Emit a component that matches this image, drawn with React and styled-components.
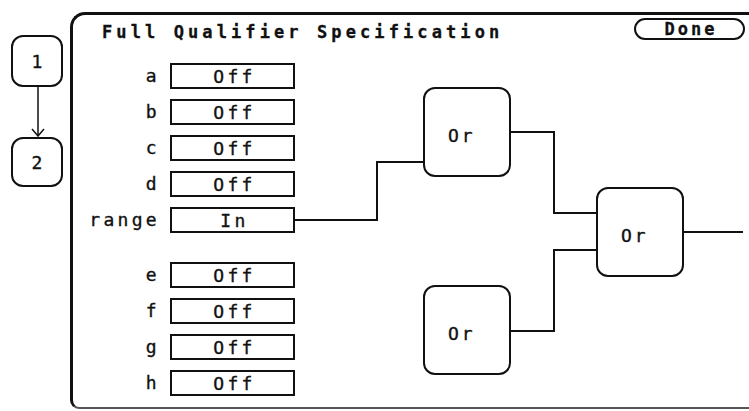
import React from "react";
import styled, { createGlobalStyle } from "styled-components";

const Global = createGlobalStyle`
  html, body { margin: 0; padding: 0; background: #fff; }
  #root { width: 749px; height: 411px; }
`;

const Screen = styled.div`
  width: 749px;
  height: 411px;
  overflow: hidden;
  display: flex;
  align-items: flex-start;
  background: #fff;
  color: #111;
  font-family: "DejaVu Sans Mono", "Liberation Mono", monospace;
`;

const StepColumn = styled.div`
  flex-shrink: 0;
  width: 52px;
  margin-left: 11px;
  margin-top: 35px;
  display: flex;
  flex-direction: column;
  align-items: center;
`;

const StepBox = styled.div`
  box-sizing: border-box;
  width: 52px;
  height: ${(p) => p.$h}px;
  border: 2px solid #111;
  border-radius: 12px;
  display: flex;
  align-items: center;
  justify-content: center;
  font-size: 18px;
  -webkit-text-stroke: 0.35px #111;
`;

const Panel = styled.div`
  flex: 1;
  margin-left: 7px;
  margin-right: -10px;
  margin-top: 12px;
  height: 397px;
  box-sizing: border-box;
  border: 3px solid #111;
  border-right: none;
  border-bottom: 2px solid #555;
  border-radius: 15px 0 0 9px;
  display: flex;
  flex-direction: column;
`;

const Header = styled.div`
  box-sizing: border-box;
  height: 48px;
  flex-shrink: 0;
  display: flex;
  align-items: flex-start;
  padding-left: 29px;
  padding-right: 14px;
`;

const Title = styled.div`
  margin-top: 7px;
  font-size: 17px;
  line-height: 20px;
  font-weight: bold;
  letter-spacing: 4.1px;
  white-space: nowrap;
  -webkit-text-stroke: 0.3px #111;
`;

const DoneButton = styled.div`
  margin-left: auto;
  margin-top: 3px;
  box-sizing: border-box;
  width: 111px;
  height: 22px;
  border: 2px solid #111;
  border-radius: 11px;
  display: flex;
  align-items: center;
  justify-content: center;
  padding-left: 3px;
  font-size: 17px;
  font-weight: bold;
  letter-spacing: 3px;
  -webkit-text-stroke: 0.3px #111;
`;

const Body = styled.div`
  flex: 1;
  display: flex;
  min-height: 0;
`;

const RowList = styled.div`
  flex-shrink: 0;
  width: 222px;
  display: flex;
  flex-direction: column;
`;

const RowGroup = styled.div`
  display: grid;
  grid-template-columns: 84px 125px;
  grid-auto-rows: 26px;
  column-gap: 13px;
  row-gap: 10px;
  margin-top: ${(p) => p.$offset || 0}px;
`;

const Label = styled.div`
  justify-self: end;
  margin-right: -3px;
  font-size: 18px;
  line-height: 26px;
  letter-spacing: 3.3px;
  -webkit-text-stroke: 0.35px #111;
`;

const Field = styled.div`
  box-sizing: border-box;
  border: 2px solid #111;
  display: flex;
  align-items: center;
  justify-content: center;
  padding-left: 4px;
  font-size: 18px;
  letter-spacing: 3.3px;
  -webkit-text-stroke: 0.35px #111;
`;

const Canvas = styled.div`
  flex: 1;
  position: relative;
`;

const Wires = styled.svg`
  position: absolute;
  left: 0;
  top: 0;
  width: 100%;
  height: 100%;
  overflow: visible;
`;

const Gate = styled.div`
  position: absolute;
  left: ${(p) => p.$x}px;
  top: ${(p) => p.$y}px;
  box-sizing: border-box;
  width: 88px;
  height: 90px;
  border: 2px solid #111;
  border-radius: 12px;
  background: #fff;
  display: flex;
  align-items: center;
  padding-left: 23px;
  padding-top: 6px;
  font-size: 18px;
  letter-spacing: 3px;
  -webkit-text-stroke: 0.35px #111;
`;

const groupA = [
  ["a", "Off"],
  ["b", "Off"],
  ["c", "Off"],
  ["d", "Off"],
  ["range", "In"],
];
const groupB = [
  ["e", "Off"],
  ["f", "Off"],
  ["g", "Off"],
  ["h", "Off"],
];

function Rows({ items, offset }) {
  return (
    <RowGroup $offset={offset}>
      {items.map(([l, v]) => (
        <React.Fragment key={l}>
          <Label>{l}</Label>
          <Field>{v}</Field>
        </React.Fragment>
      ))}
    </RowGroup>
  );
}

export default function App() {
  return (
    <>
      <Global />
      <Screen>
        <StepColumn>
          <StepBox $h={52}>1</StepBox>
          <svg width="52" height="50" viewBox="0 0 52 50">
            <line x1="27" y1="0" x2="27" y2="49" stroke="#111" strokeWidth="1.5" />
            <polyline points="21,42 27,49 33,42" fill="none" stroke="#111" strokeWidth="1.5" />
          </svg>
          <StepBox $h={50}>2</StepBox>
        </StepColumn>
        <Panel>
          <Header>
            <Title>Full Qualifier Specification</Title>
            <DoneButton>Done</DoneButton>
          </Header>
          <Body>
            <RowList>
              <Rows items={groupA} />
              <Rows items={groupB} offset={29} />
            </RowList>
            <Canvas>
              <Wires>
                <g fill="none" stroke="#111" strokeWidth="2">
                  <polyline points="0,157 82,157 82,99 128,99" />
                  <polyline points="216,69 259,69 259,150 301,150" />
                  <polyline points="216,268 259,268 259,187 301,187" />
                  <polyline points="389,169 448,169" />
                </g>
              </Wires>
              <Gate $x={128} $y={24}>Or</Gate>
              <Gate $x={301} $y={124}>Or</Gate>
              <Gate $x={128} $y={222}>Or</Gate>
            </Canvas>
          </Body>
        </Panel>
      </Screen>
    </>
  );
}
